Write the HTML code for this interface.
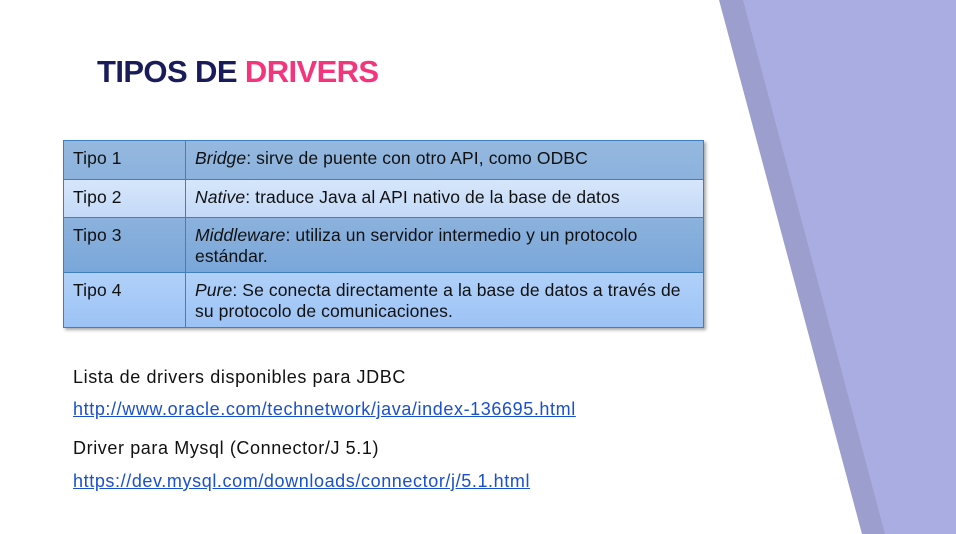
<!DOCTYPE html>
<html><head><meta charset="utf-8"><style>
body{margin:0;width:956px;height:534px;overflow:hidden;background:#fff;font-family:"Liberation Sans",sans-serif;position:relative}
svg.bg{position:absolute;left:0;top:0}
h1{position:absolute;left:97px;top:54px;margin:0;font-size:31px;font-weight:bold;color:#1a1b5b;letter-spacing:-0.6px;line-height:36px}
h1 span{color:#f5357b}
table{position:absolute;left:63px;top:140px;width:641px;border-collapse:collapse;font-size:17.5px;color:#111;box-shadow:2px 2px 3px rgba(0,0,0,.35)}
td{border:1px solid #3f7fc0;padding:7px 9px 0 9px;vertical-align:top;line-height:21px;letter-spacing:0.1px}
td:first-child{width:103px}
tr.r1{height:39px;background:linear-gradient(#95b8de,#8bb2dd)}
tr.r2{height:38px;background:linear-gradient(#d6e6fb,#c3d9f8)}
tr.r3{height:55px;background:linear-gradient(#8cb2dd,#79a6d9)}
tr.r4{height:55px;background:linear-gradient(#b0d0f8,#9cc3f6)}
.t{position:absolute;left:73px;font-size:18px;color:#111;letter-spacing:0.6px}
a{color:#1a4fd0;text-decoration:underline}
</style></head><body>
<svg class="bg" width="956" height="534"><polygon points="719,0 956,0 956,534 862,534" fill="#9c9fce"/><polygon points="743,0 956,0 956,534 885,534" fill="#aaade2"/></svg>
<h1>TIPOS DE <span>DRIVERS</span></h1>
<table>
<tr class="r1"><td>Tipo 1</td><td><i>Bridge</i>: sirve de puente con otro API, como ODBC</td></tr>
<tr class="r2"><td>Tipo 2</td><td><i>Native</i>: traduce Java al API nativo de la base de datos</td></tr>
<tr class="r3"><td>Tipo 3</td><td><i>Middleware</i>: utiliza un servidor intermedio y un protocolo<br>estándar.</td></tr>
<tr class="r4"><td>Tipo 4</td><td><i>Pure</i>: Se conecta directamente a la base de datos a través de<br>su protocolo de comunicaciones.</td></tr>
</table>
<div class="t" style="top:367px">Lista de drivers disponibles para JDBC</div>
<div class="t" style="top:399px"><a>http://www.oracle.com/technetwork/java/index-136695.html</a></div>
<div class="t" style="top:438px">Driver para Mysql (Connector/J 5.1)</div>
<div class="t" style="top:471px"><a>https://dev.mysql.com/downloads/connector/j/5.1.html</a></div>
</body></html>
